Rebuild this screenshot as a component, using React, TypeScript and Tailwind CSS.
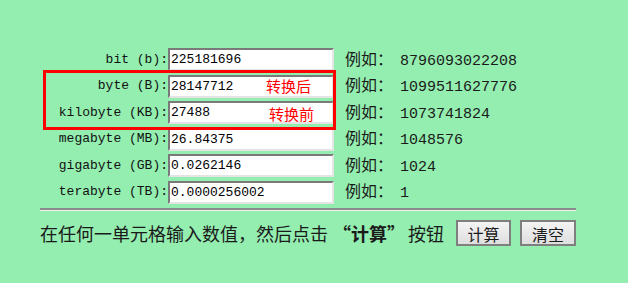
import { FC } from 'react'

type Unit = {
    label: string
    value: string
    example: string
}

const units: Unit[] = [
    { label: 'bit (b):', value: '225181696', example: '8796093022208' },
    { label: 'byte (B):', value: '28147712', example: '1099511627776' },
    { label: 'kilobyte (KB):', value: '27488', example: '1073741824' },
    { label: 'megabyte (MB):', value: '26.84375', example: '1048576' },
    { label: 'gigabyte (GB):', value: '0.0262146', example: '1024' },
    { label: 'terabyte (TB):', value: '0.0000256002', example: '1' },
]

const mono = "font-['Liberation_Mono','Noto_Sans_CJK_SC',monospace]"

const UnitRow: FC<{ unit: Unit }> = ({ unit }) => (
    <div className="flex items-center h-[23px]">
        <span className={`${mono} w-[128px] text-right text-[13px] text-[#111] whitespace-pre`}>
            {unit.label}
        </span>
        <input
            readOnly
            value={unit.value}
            className={`${mono} w-[166px] h-[23px] bg-white text-[13px] text-black px-[1px] border-2 border-t-[#7a7a7a] border-l-[#7a7a7a] border-b-[#e4e4e4] border-r-[#e4e4e4] outline-none`}
        />
        <span className="ml-[11px] flex items-baseline text-[#1a1a1a] leading-[23px]">
            <span className="w-[55px] text-[16px] whitespace-pre">例如：</span>
            <span className={`${mono} text-[15px]`}>{unit.example}</span>
        </span>
    </div>
)

const App: FC = () => {
    return (
        <div className="w-[628px] h-[283px] bg-[#94eeb0] pt-[48px] pl-[40px] font-['Noto_Sans_CJK_SC',sans-serif]">
            <div className="relative flex flex-col gap-y-[3.5px]">
                {units.map((unit) => (
                    <UnitRow key={unit.label} unit={unit} />
                ))}
                <div className="absolute left-[3px] top-[22px] w-[293px] h-[60px] border-[3px] border-[#ff0000] pointer-events-none">
                    <span className="absolute left-[220px] top-[5px] text-[15px] leading-none text-[#ff0000]">转换后</span>
                    <span className="absolute left-[223px] top-[33px] text-[15px] leading-none text-[#ff0000]">转换前</span>
                </div>
            </div>
            <hr className="mt-[4px] w-[536px] border-t-2 border-t-[#8a8a8a] border-b border-b-[#f0f0f0]" />
            <div className="flex items-center mt-[9px]">
                <span className="flex items-center text-[18px] text-[#1a1a1a] leading-none">
                    在任何一单元格输入数值，然后点击
                    <b className="flex items-center font-bold">
                        <span className="inline-block w-[23px] text-right">“</span>
                        计算
                        <span className="inline-block w-[21px] text-left">”</span>
                    </b>
                    按钮
                </span>
                <button className="ml-[12px] w-[55px] h-[26px] text-[16px] text-[#1a1a1a] bg-gradient-to-b from-[#f4f4f4] to-[#dedede] border-2 border-[#7f7f7f]">
                    计算
                </button>
                <button className="ml-[9px] w-[56px] h-[26px] text-[16px] text-[#1a1a1a] bg-gradient-to-b from-[#f4f4f4] to-[#dedede] border-2 border-[#7f7f7f]">
                    清空
                </button>
            </div>
        </div>
    )
}

export default App
